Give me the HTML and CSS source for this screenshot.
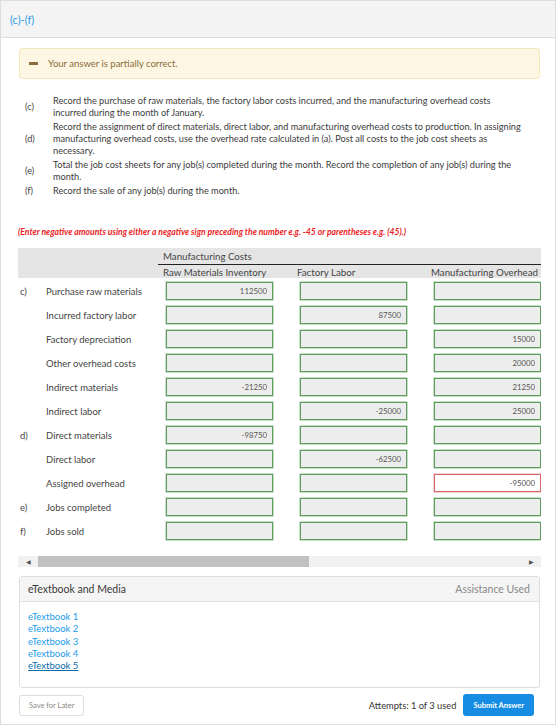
FILE: index.html
```html
<!DOCTYPE html>
<html lang="en">
<head>
    <meta charset="UTF-8">
    <title>(c)-(f)</title>
    <link rel="stylesheet" href="styles.css">
</head>
<body>

<div class="panel">
    <div class="panel-head">
        <span class="part-title">(c)-(f)</span>
    </div>

    <div class="panel-body">
        <!-- answer status -->
        <div class="alert">
            <span class="alert-icon"></span>
            <span>Your answer is partially correct.</span>
        </div>

        <!-- what each part asks -->
        <table class="steps">
            <tr>
                <td class="step-key">(c)</td>
                <td>Record the purchase of raw materials, the factory labor costs incurred, and the manufacturing overhead costs incurred during the month of January.</td>
            </tr>
            <tr>
                <td class="step-key">(d)</td>
                <td>Record the assignment of direct materials, direct labor, and manufacturing overhead costs to production. In assigning manufacturing overhead costs, use the overhead rate calculated in (a). Post all costs to the job cost sheets as necessary.</td>
            </tr>
            <tr>
                <td class="step-key">(e)</td>
                <td>Total the job cost sheets for any job(s) completed during the month. Record the completion of any job(s) during the month.</td>
            </tr>
            <tr>
                <td class="step-key">(f)</td>
                <td>Record the sale of any job(s) during the month.</td>
            </tr>
        </table>

        <p class="note">(Enter negative amounts using either a negative sign preceding the number e.g. -45 or parentheses e.g. (45).)</p>

        <!-- T-account grid -->
        <div class="grid-wrap">
            <table class="grid">
                <colgroup>
                    <col class="col-key">
                    <col class="col-label">
                    <col class="col-money">
                    <col class="col-money">
                    <col class="col-money">
                </colgroup>
                <tr class="head-top">
                    <th colspan="2" rowspan="2"></th>
                    <th class="group" colspan="3">Manufacturing Costs</th>
                </tr>
                <tr class="head-sub">
                    <th>Raw Materials Inventory</th>
                    <th>Factory Labor</th>
                    <th>Manufacturing Overhead</th>
                </tr>
                <tr>
                    <td class="key">c)</td>
                    <td class="label">Purchase raw materials</td>
                    <td class="cell"><input type="text" value="112500"></td>
                    <td class="cell"><input type="text" value=""></td>
                    <td class="cell"><input type="text" value=""></td>
                </tr>
                <tr>
                    <td class="key"></td>
                    <td class="label">Incurred factory labor</td>
                    <td class="cell"><input type="text" value=""></td>
                    <td class="cell"><input type="text" value="87500"></td>
                    <td class="cell"><input type="text" value=""></td>
                </tr>
                <tr>
                    <td class="key"></td>
                    <td class="label">Factory depreciation</td>
                    <td class="cell"><input type="text" value=""></td>
                    <td class="cell"><input type="text" value=""></td>
                    <td class="cell"><input type="text" value="15000"></td>
                </tr>
                <tr>
                    <td class="key"></td>
                    <td class="label">Other overhead costs</td>
                    <td class="cell"><input type="text" value=""></td>
                    <td class="cell"><input type="text" value=""></td>
                    <td class="cell"><input type="text" value="20000"></td>
                </tr>
                <tr>
                    <td class="key"></td>
                    <td class="label">Indirect materials</td>
                    <td class="cell"><input type="text" value="-21250"></td>
                    <td class="cell"><input type="text" value=""></td>
                    <td class="cell"><input type="text" value="21250"></td>
                </tr>
                <tr>
                    <td class="key"></td>
                    <td class="label">Indirect labor</td>
                    <td class="cell"><input type="text" value=""></td>
                    <td class="cell"><input type="text" value="-25000"></td>
                    <td class="cell"><input type="text" value="25000"></td>
                </tr>
                <tr>
                    <td class="key">d)</td>
                    <td class="label">Direct materials</td>
                    <td class="cell"><input type="text" value="-98750"></td>
                    <td class="cell"><input type="text" value=""></td>
                    <td class="cell"><input type="text" value=""></td>
                </tr>
                <tr>
                    <td class="key"></td>
                    <td class="label">Direct labor</td>
                    <td class="cell"><input type="text" value=""></td>
                    <td class="cell"><input type="text" value="-62500"></td>
                    <td class="cell"><input type="text" value=""></td>
                </tr>
                <tr>
                    <td class="key"></td>
                    <td class="label">Assigned overhead</td>
                    <td class="cell"><input type="text" value=""></td>
                    <td class="cell"><input type="text" value=""></td>
                    <td class="cell"><input type="text" class="wrong" value="-95000"></td>
                </tr>
                <tr>
                    <td class="key">e)</td>
                    <td class="label">Jobs completed</td>
                    <td class="cell"><input type="text" value=""></td>
                    <td class="cell"><input type="text" value=""></td>
                    <td class="cell"><input type="text" value=""></td>
                </tr>
                <tr>
                    <td class="key">f)</td>
                    <td class="label">Jobs sold</td>
                    <td class="cell"><input type="text" value=""></td>
                    <td class="cell"><input type="text" value=""></td>
                    <td class="cell"><input type="text" value=""></td>
                </tr>
            </table>
        </div>

        <!-- horizontal scroller under the grid -->
        <div class="hscroll">
            <span class="hscroll-btn">&#9664;</span>
            <div class="hscroll-track"><div class="hscroll-thumb"></div></div>
            <span class="hscroll-btn">&#9654;</span>
        </div>

        <!-- eTextbook links -->
        <div class="media">
            <div class="media-head">
                <span>eTextbook and Media</span>
                <span class="assist">Assistance Used</span>
            </div>
            <div class="media-body">
                <a href="#">eTextbook 1</a>
                <a href="#">eTextbook 2</a>
                <a href="#">eTextbook 3</a>
                <a href="#">eTextbook 4</a>
                <a href="#" class="visited">eTextbook 5</a>
            </div>
        </div>

        <div class="actions">
            <button class="save-button">Save for Later</button>
            <div class="submit-box">
                <span class="attempts">Attempts: 1 of 3 used</span>
                <button class="submit-button">Submit Answer</button>
            </div>
        </div>
    </div>
</div>

</body>
</html>
```

FILE: styles.css
```css
/* page */
body {
    margin: 0;
    font-family: Lato, "Liberation Sans", sans-serif;
    color: #333333;
    background-color: #FFFFFF;
}
.panel {
    width: 556px;
    height: 725px;
    box-sizing: border-box;
    border: 1px solid #dddddd;
}
.panel-head {
    height: 36px;
    background-color: #f4f4f4;
    border-bottom: 1px solid #dddddd;
    display: flex;
    align-items: center;
    padding-left: 9px;
}
.part-title {
    font-size: 11px;
    color: #2f9be6;
}
.panel-body {
    padding: 10px 15px 0 17px;
}

/* answer status */
.alert {
    display: flex;
    align-items: center;
    height: 29px;
    background-color: #fdf6e2;
    border: 1px solid #f6e8bd;
    border-radius: 3px;
    font-size: 9.5px;
    color: #8a6d3b;
    margin-left: 1px;
}
.alert-icon {
    width: 9px;
    height: 3px;
    background-color: #8a6d3b;
    margin: 0 10px 0 9px;
}

/* part descriptions */
.steps {
    border-collapse: collapse;
    margin: 15px 0 0 7px;
    font-size: 9.2px;
    line-height: 12px;
    color: #3c3c3c;
}
.steps td {
    padding: 1px 0;
    vertical-align: middle;
}
.steps td.step-key {
    width: 28px;
    color: #444444;
}
.steps td + td {
    padding-right: 17px;
}
.note {
    margin: 28px 0 10px 0;
    font-size: 8.6px;
    font-style: italic;
    font-weight: bold;
    color: #ec1c24;
    line-height: 12px;
}

/* grid */
.grid-wrap {
    width: 523px;
    overflow: hidden;
}
.grid {
    border-collapse: collapse;
    width: 542px;
    table-layout: fixed;
    font-size: 9.5px;
    color: #444444;
}
.col-key {
    width: 22px;
}
.col-label {
    width: 118px;
}
.col-money {
    width: 134px;
}
.grid th {
    background-color: #e5e5e5;
    font-size: 9.7px;
    font-weight: normal;
    text-align: left;
    padding: 0 0 0 5px;
    white-space: nowrap;
    overflow: hidden;
}
.head-top th {
    height: 16px;
}
.head-top th.group {
    border-bottom: 1px solid #222222;
}
.head-sub th {
    height: 13px;
}
.grid td {
    padding: 4px 0 2px 0;
    height: 18px;
    vertical-align: middle;
    white-space: nowrap;
}
.grid td.key {
    padding-left: 2px;
}
.grid td.label {
    padding-left: 6px;
}
.grid td.cell {
    padding-left: 8px;
}
.grid input {
    display: block;
    width: 107px;
    height: 18px;
    box-sizing: border-box;
    margin: 0;
    padding: 0 5px 0 0;
    border: 1px solid #5f9d5f;
    box-shadow: 0 0 0 0.5px #8fbf8f;
    background-color: #ededed;
    font-family: Lato, "Liberation Sans", sans-serif;
    font-size: 7.8px;
    color: #555555;
    text-align: right;
}
.grid input.wrong {
    background-color: #FFFFFF;
    border-color: #d9686b;
    box-shadow: 0 0 0 0.5px #eba3a5;
}

/* fake scroller */
.hscroll {
    display: flex;
    align-items: center;
    width: 523px;
    height: 11px;
    margin-top: 14px;
    background-color: #f1f1f1;
}
.hscroll-btn {
    width: 20px;
    font-size: 6px;
    color: #505050;
    text-align: center;
    line-height: 11px;
}
.hscroll-track {
    flex: 1;
    height: 11px;
}
.hscroll-thumb {
    width: 271px;
    height: 11px;
    background-color: #c1c1c1;
}

/* eTextbook box */
.media {
    margin: 9px 0 0 1px;
    border: 1px solid #dedede;
    border-radius: 3px;
    height: 112px;
    box-sizing: border-box;
}
.media-head {
    display: flex;
    justify-content: space-between;
    align-items: center;
    height: 24px;
    padding: 0 9px 0 8px;
    background-color: #f5f5f5;
    border-bottom: 1px solid #e2e2e2;
    font-size: 10.5px;
    color: #3a3a3a;
}
.media-head .assist {
    color: #888888;
}
.media-body {
    display: flex;
    flex-direction: column;
    align-items: flex-start;
    padding: 9px 8px 0 8px;
}
.media-body a {
    font-size: 9.5px;
    line-height: 12.3px;
    color: #1d9cec;
    text-decoration: none;
}
.media-body a.visited {
    color: #0d6aa8;
    text-decoration: underline;
}

/* bottom buttons */
.actions {
    display: flex;
    justify-content: space-between;
    align-items: center;
    margin: 6px 6px 0 1px;
}
.save-button {
    height: 21px;
    padding: 0 9px;
    background-color: #FFFFFF;
    border: 1px solid #dddddd;
    border-radius: 3px;
    font-family: Lato, "Liberation Sans", sans-serif;
    font-size: 7.5px;
    color: #8a8a8a;
}
.submit-box {
    display: flex;
    align-items: center;
    gap: 7px;
}
.attempts {
    font-size: 9.3px;
    color: #333333;
}
.submit-button {
    height: 22px;
    padding: 0 10px;
    background-color: #168de2;
    border: none;
    border-radius: 3px;
    font-family: Lato, "Liberation Sans", sans-serif;
    font-size: 7.5px;
    font-weight: bold;
    color: #FFFFFF;
}
```
